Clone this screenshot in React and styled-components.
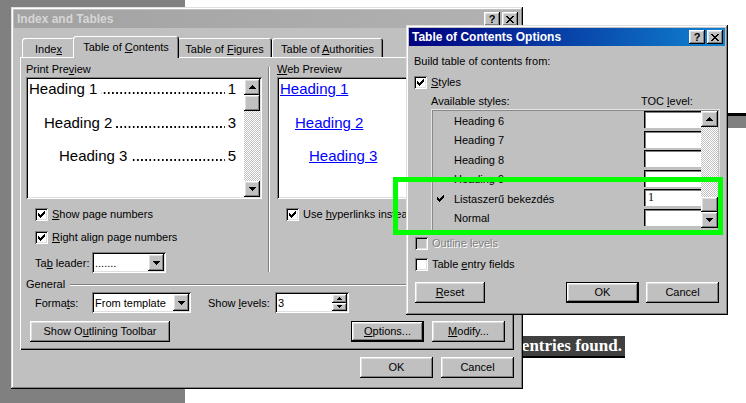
import React from 'react';
import styled, { createGlobalStyle, css } from 'styled-components';

const face = '#c0c0c0';

const GlobalStyle = createGlobalStyle`
  html, body {
    margin: 0;
    padding: 0;
    background: #fff;
  }
  body {
    font-family: "Liberation Sans", Arial, sans-serif;
    font-size: 11px;
    color: #000;
  }
  u {
    text-decoration: underline;
    text-underline-offset: 1px;
  }
`;

const raised = css`
  box-shadow: inset -1px -1px #000, inset 1px 1px #fff, inset -2px -2px #808080, inset 2px 2px #dfdfdf;
`;

const sunken = css`
  box-shadow: inset 1px 1px #808080, inset -1px -1px #fff, inset 2px 2px #000, inset -2px -2px #dfdfdf;
`;

const Desktop = styled.div`
  position: relative;
  width: 746px;
  height: 403px;
  overflow: hidden;
  background: linear-gradient(90deg, #808080 0 185px, #fff 185px);
`;

/* document content behind the dialogs */
const DocBar = styled.div`
  position: absolute;
  left: 728px;
  top: 113px;
  width: 18px;
  height: 15px;
  box-sizing: border-box;
  background: #808080;
  border-top: 3px solid #000;
`;

const Highlight = styled.div`
  position: absolute;
  right: 121px;
  top: 336px;
  height: 22px;
  box-sizing: border-box;
  padding: 0 3px 0 2px;
  background: #404040;
  border-bottom: 2px solid #000;
  color: #fff;
  font: bold 17px "Liberation Serif", "Times New Roman", serif;
  line-height: 20px;
  white-space: nowrap;
`;

const Window = styled.div`
  position: absolute;
  left: ${p => p.x}px;
  top: ${p => p.y}px;
  width: ${p => p.w}px;
  height: ${p => p.h}px;
  box-sizing: border-box;
  padding: 3px;
  background: ${face};
  box-shadow: inset -1px -1px #000, inset 1px 1px #dfdfdf, inset -2px -2px #808080, inset 2px 2px #fff;
  display: flex;
  flex-direction: column;
`;

const TitleBar = styled.div`
  height: 18px;
  flex-shrink: 0;
  display: flex;
  align-items: center;
  padding: 0 2px 0 3px;
  background: ${p => (p.active ? 'linear-gradient(90deg, #000080, #1084d0)' : 'linear-gradient(90deg, #a2a2a2, #b2b2b2)')};
  color: ${p => (p.active ? '#fff' : '#d6d6d6')};
  font-weight: bold;
  font-size: 12px;
`;

const TitleText = styled.span`
  flex: 1;
  white-space: nowrap;
`;

const TitleButton = styled.div`
  width: 16px;
  height: 14px;
  margin-left: ${p => p.gap || 0}px;
  box-sizing: border-box;
  background: ${face};
  ${raised};
  display: flex;
  align-items: center;
  justify-content: center;
  color: #000;
  font-size: 11px;
  font-weight: bold;
  line-height: 14px;
`;

const CloseGlyph = () => (
  <svg width="8" height="7" viewBox="0 0 8 7" shapeRendering="crispEdges">
    <path
      d="M0 0h2v1h-2z M6 0h2v1h-2z M1 1h2v1h-2z M5 1h2v1h-2z M2 2h4v1h-4z M3 3h2v1h-2z M2 4h4v1h-4z M1 5h2v1h-2z M5 5h2v1h-2z M0 6h2v1h-2z M6 6h2v1h-2z"
      fill="#000"
    />
  </svg>
);

const TitleButtons = () => (
  <>
    <TitleButton>?</TitleButton>
    <TitleButton gap={2}>
      <CloseGlyph />
    </TitleButton>
  </>
);

const CheckGlyph = () => (
  <svg width="7" height="7" viewBox="0 0 7 7" shapeRendering="crispEdges">
    <path
      d="M0 2h1v3h-1z M1 3h1v3h-1z M2 4h1v3h-1z M3 3h1v3h-1z M4 2h1v3h-1z M5 1h1v3h-1z M6 0h1v3h-1z"
      fill="#000"
    />
  </svg>
);

const Arrow = ({ up, small }) =>
  small ? (
    <svg width="5" height="3" viewBox="0 0 5 3" shapeRendering="crispEdges">
      <path d={up ? 'M2 0h1v1h-1z M1 1h3v1h-3z M0 2h5v1h-5z' : 'M0 0h5v1h-5z M1 1h3v1h-3z M2 2h1v1h-1z'} fill="#000" />
    </svg>
  ) : (
    <svg width="7" height="4" viewBox="0 0 7 4" shapeRendering="crispEdges">
      <path
        d={up ? 'M3 0h1v1h-1z M2 1h3v1h-3z M1 2h5v1h-5z M0 3h7v1h-7z' : 'M0 0h7v1h-7z M1 1h5v1h-5z M2 2h3v1h-3z M3 3h1v1h-1z'}
        fill="#000"
      />
    </svg>
  );

/* ---------- Index and Tables ---------- */

const MainBody = styled.div`
  flex: 1;
  display: flex;
  flex-direction: column;
  padding: 8px 6px 0 6px;
`;

const TabRow = styled.div`
  height: 21px;
  display: flex;
  align-items: flex-end;
  padding-left: 2px;
  position: relative;
  z-index: 1;
`;

const Tab = styled.div`
  position: relative;
  z-index: ${p => (p.selected ? 2 : 1)};
  width: ${p => p.w + (p.selected ? 4 : 0)}px;
  height: ${p => (p.selected ? 22 : 19)}px;
  margin: ${p => (p.selected ? '0 -2px -1px' : '0')};
  box-sizing: border-box;
  padding-top: 5px;
  background: ${face};
  border-radius: 3px 3px 0 0;
  box-shadow: inset 1px 1px #fff, inset -1px 0 #000, inset -2px 0 #808080;
  text-align: center;
  line-height: 13px;
  white-space: nowrap;
`;

const Panel = styled.div`
  height: 293px;
  box-sizing: border-box;
  padding: 6px 9px 8px 6px;
  background: ${face};
  box-shadow: inset 1px 1px #fff, inset -1px -1px #000, inset -2px -2px #808080;
  display: flex;
  flex-direction: column;
`;

const TopSection = styled.div`
  height: 210px;
  display: flex;
`;

const Column = styled.div`
  width: ${p => (p.w ? `${p.w}px` : 'auto')};
  flex: ${p => (p.w ? 'none' : 1)};
  display: flex;
  flex-direction: column;
  min-width: 0;
`;

const VSeparator = styled.div`
  width: 0;
  margin: 4px 7px 1px 6px;
  border-left: 1px solid #808080;
  border-right: 1px solid #fff;
`;

const Caption = styled.div`
  line-height: 13px;
  margin-bottom: 1px;
  white-space: nowrap;
`;

const PreviewBox = styled.div`
  height: 122px;
  box-sizing: border-box;
  padding: 2px;
  background: #fff;
  ${sunken};
  display: flex;
`;

const PreviewContent = styled.div`
  flex: 1;
  min-width: 0;
  padding: 1px ${p => p.pr || 0}px 0 1px;
  font-size: 15px;
`;

const LeaderRow = styled.div`
  display: flex;
  height: 17px;
  line-height: 17px;
  padding-left: ${p => p.indent}px;
  white-space: nowrap;
  & + & {
    margin-top: 16.5px;
  }
`;

/* dotted tab leader, drawn as a repeated dot */
const Dots = styled.span`
  flex: 1;
  margin: 0 3px 0 4px;
  background: linear-gradient(90deg, #000 1.4px, transparent 1.4px) right 12px / 4.17px 1.5px repeat-x;
`;

const LinkRow = styled.div`
  height: 17px;
  line-height: 17px;
  padding-left: ${p => p.indent}px;
  white-space: nowrap;
  & + & {
    margin-top: 16.5px;
  }
`;

const WebLink = styled.span`
  color: #0000ff;
  text-decoration: underline;
`;

const ScrollCol = styled.div`
  width: ${p => p.w}px;
  flex-shrink: 0;
  display: flex;
  flex-direction: column;
`;

const ScrollBtn = styled.div`
  height: 16px;
  flex-shrink: 0;
  background: ${face};
  ${raised};
  display: flex;
  align-items: center;
  justify-content: center;
`;

const Thumb = styled.div`
  height: ${p => p.h}px;
  flex-shrink: 0;
  background: ${face};
  ${raised};
`;

const Track = styled.div`
  flex: 1;
  background: repeating-conic-gradient(#fff 0% 25%, ${face} 0% 50%) 0 0 / 2px 2px;
`;

const ScrollBar = ({ w, thumb, thumbAtEnd }) => (
  <ScrollCol w={w}>
    <ScrollBtn>
      <Arrow up />
    </ScrollBtn>
    {!thumbAtEnd && <Thumb h={thumb} />}
    <Track />
    {thumbAtEnd && <Thumb h={thumb} />}
    <ScrollBtn>
      <Arrow />
    </ScrollBtn>
  </ScrollCol>
);

const CheckRow = styled.div`
  display: flex;
  align-items: center;
  gap: 4px;
  height: 13px;
  line-height: 13px;
  margin-top: ${p => p.mt || 0}px;
  padding-left: ${p => p.pl || 0}px;
  white-space: nowrap;
  color: ${p => (p.disabled ? '#808080' : '#000')};
  text-shadow: ${p => (p.disabled ? '1px 1px #fff' : 'none')};
`;

const Box = styled.span`
  width: 13px;
  height: 13px;
  flex-shrink: 0;
  box-sizing: border-box;
  background: ${p => (p.disabled ? face : '#fff')};
  ${sunken};
  display: inline-flex;
  align-items: center;
  justify-content: center;
`;

const Checkbox = ({ checked, disabled, children, mt, pl }) => (
  <CheckRow mt={mt} pl={pl} disabled={disabled}>
    <Box disabled={disabled}>{checked && <CheckGlyph />}</Box>
    <span>{children}</span>
  </CheckRow>
);

const FieldRow = styled.div`
  display: flex;
  align-items: center;
  height: 21px;
  margin-top: ${p => p.mt || 0}px;
  padding-left: ${p => p.pl || 0}px;
`;

const FieldLabel = styled.span`
  width: ${p => p.w}px;
  margin-left: ${p => p.ml || 0}px;
  flex-shrink: 0;
  white-space: nowrap;
`;

const Field = styled.div`
  width: ${p => p.w}px;
  height: 21px;
  box-sizing: border-box;
  padding: 2px;
  background: #fff;
  ${sunken};
  display: flex;
  align-items: center;
  flex-shrink: 0;
`;

const FieldText = styled.span`
  flex: 1;
  padding-left: 1px;
  white-space: nowrap;
  overflow: hidden;
`;

const DropButton = styled.div`
  width: 16px;
  height: 17px;
  background: ${face};
  ${raised};
  display: flex;
  align-items: center;
  justify-content: center;
`;

const SpinButtons = styled.div`
  width: 15px;
  height: 17px;
  display: flex;
  flex-direction: column;
`;

const SpinHalf = styled.div`
  flex: 1;
  background: ${face};
  ${raised};
  display: flex;
  align-items: center;
  justify-content: center;
`;

const GroupHeader = styled.div`
  display: flex;
  align-items: center;
  gap: 5px;
  margin-top: 5px;
  line-height: 13px;
  &::after {
    content: '';
    flex: 1;
    border-top: 1px solid #808080;
    border-bottom: 1px solid #fff;
  }
`;

const ButtonRow = styled.div`
  display: flex;
  align-items: center;
  gap: ${p => p.gap || 8}px;
  margin-top: ${p => p.mt || 0}px;
  padding-left: ${p => p.pl || 0}px;
  justify-content: ${p => (p.end ? 'flex-end' : 'flex-start')};
`;

const Button = styled.div`
  width: ${p => p.w}px;
  height: 21px;
  flex-shrink: 0;
  box-sizing: border-box;
  margin-left: ${p => (p.push ? 'auto' : '0')};
  background: ${face};
  border: ${p => (p.isDefault ? '1px solid #000' : 'none')};
  ${raised};
  display: flex;
  align-items: center;
  justify-content: center;
  line-height: 13px;
  white-space: nowrap;
`;

/* ---------- Table of Contents Options ---------- */

const OptionsBody = styled.div`
  flex: 1;
  display: flex;
  flex-direction: column;
  padding: 9px 6px 0 5px;
`;

const TextLine = styled.div`
  line-height: 13px;
  white-space: nowrap;
`;

const StylesHeader = styled.div`
  display: grid;
  grid-template-columns: 210px 1fr;
  margin: 6px 0 0 17px;
  line-height: 13px;
  white-space: nowrap;
`;

const StyleList = styled.div`
  width: 289px;
  height: 122px;
  box-sizing: border-box;
  margin: 1px 0 0 17px;
  padding: 2px 2px 3px 2px;
  background: ${face};
  box-shadow: inset 0 0 0 1px #e4e4e4, inset 1px 1px 0 1px #8a8a8a;
  display: flex;
`;

const StyleRows = styled.div`
  flex: 1;
  display: flex;
  flex-direction: column;
`;

const StyleRow = styled.div`
  height: 19.5px;
  display: grid;
  grid-template-columns: 21px 1fr 57px;
  align-items: center;
`;

const Mark = styled.span`
  display: flex;
  padding-left: 4px;
`;

const LevelInput = styled.div`
  align-self: start;
  height: 17px;
  box-sizing: border-box;
  padding-left: 3px;
  background: #fff;
  border-top: 1px solid #000;
  border-left: 1px solid #000;
  box-shadow: inset 1px 1px #808080;
  line-height: 15px;
  font-family: "Liberation Serif", serif;
  font-size: 12px;
`;

const GreenFrame = styled.div`
  position: absolute;
  left: 393px;
  top: 177px;
  width: 330px;
  height: 58px;
  box-sizing: border-box;
  border: 5px solid #00ff00;
  pointer-events: none;
`;

const tocStyles = [
  { name: 'Heading 6' },
  { name: 'Heading 7' },
  { name: 'Heading 8' },
  { name: 'Heading 9' },
  { name: 'Listaszerű bekezdés', checked: true, level: '1' },
  { name: 'Normal' },
];

const printRows = [
  { text: 'Heading 1', page: '1', indent: 0 },
  { text: 'Heading 2', page: '3', indent: 15 },
  { text: 'Heading 3', page: '5', indent: 30 },
];

const webRows = [
  { text: 'Heading 1', indent: 0 },
  { text: 'Heading 2', indent: 15 },
  { text: 'Heading 3', indent: 29 },
];

export default function App() {
  return (
    <>
      <GlobalStyle />
      <Desktop>
        <DocBar />
        <Highlight>No table of contents entries found.</Highlight>

        <Window x={11} y={7} w={512} h={382}>
          <TitleBar>
            <TitleText>Index and Tables</TitleText>
            <TitleButtons />
          </TitleBar>
          <MainBody>
            <TabRow>
              <Tab w={53}>
                Inde<u>x</u>
              </Tab>
              <Tab w={102} selected>
                Table of <u>C</u>ontents
              </Tab>
              <Tab w={95}>
                Table of <u>F</u>igures
              </Tab>
              <Tab w={111}>
                Table of <u>A</u>uthorities
              </Tab>
            </TabRow>
            <Panel>
              <TopSection>
                <Column w={236}>
                  <Caption>
                    Print Pre<u>v</u>iew
                  </Caption>
                  <PreviewBox>
                    <PreviewContent pr={8}>
                      {printRows.map(r => (
                        <LeaderRow key={r.text} indent={r.indent}>
                          <span>{r.text}</span>
                          <Dots />
                          <span>{r.page}</span>
                        </LeaderRow>
                      ))}
                    </PreviewContent>
                    <ScrollBar w={16} thumb={16} />
                  </PreviewBox>
                  <Checkbox checked mt={9} pl={9}>
                    <u>S</u>how page numbers
                  </Checkbox>
                  <Checkbox checked mt={10} pl={9}>
                    <u>R</u>ight align page numbers
                  </Checkbox>
                  <FieldRow mt={8} pl={9}>
                    <FieldLabel w={57}>
                      Ta<u>b</u> leader:
                    </FieldLabel>
                    <Field w={74}>
                      <FieldText>.......</FieldText>
                      <DropButton>
                        <Arrow />
                      </DropButton>
                    </Field>
                  </FieldRow>
                </Column>
                <VSeparator />
                <Column>
                  <Caption>
                    <u>W</u>eb Preview
                  </Caption>
                  <PreviewBox>
                    <PreviewContent>
                      {webRows.map(r => (
                        <LinkRow key={r.text} indent={r.indent}>
                          <WebLink>{r.text}</WebLink>
                        </LinkRow>
                      ))}
                    </PreviewContent>
                  </PreviewBox>
                  <Checkbox checked mt={9} pl={9}>
                    Use <u>h</u>yperlinks instead of page numbers
                  </Checkbox>
                </Column>
              </TopSection>

              <GroupHeader>General</GroupHeader>
              <FieldRow mt={1} pl={9}>
                <FieldLabel w={57}>
                  Forma<u>t</u>s:
                </FieldLabel>
                <Field w={99}>
                  <FieldText>From template</FieldText>
                  <DropButton>
                    <Arrow />
                  </DropButton>
                </Field>
                <FieldLabel w={67} ml={17}>
                  Show <u>l</u>evels:
                </FieldLabel>
                <Field w={74}>
                  <FieldText>3</FieldText>
                  <SpinButtons>
                    <SpinHalf>
                      <Arrow up small />
                    </SpinHalf>
                    <SpinHalf>
                      <Arrow small />
                    </SpinHalf>
                  </SpinButtons>
                </Field>
              </FieldRow>
              <ButtonRow mt={8} pl={4}>
                <Button w={140}>
                  Show O<u>u</u>tlining Toolbar
                </Button>
                <Button w={73} push isDefault>
                  <u>O</u>ptions...
                </Button>
                <Button w={73}>
                  <u>M</u>odify...
                </Button>
              </ButtonRow>
            </Panel>
            <ButtonRow mt={7} end>
              <Button w={73}>OK</Button>
              <Button w={73}>Cancel</Button>
            </ButtonRow>
          </MainBody>
        </Window>

        <Window x={406} y={25} w={322} h={290}>
          <TitleBar active>
            <TitleText>Table of Contents Options</TitleText>
            <TitleButtons />
          </TitleBar>
          <OptionsBody>
            <TextLine>Build table of contents from:</TextLine>
            <Checkbox checked mt={8}>
              <u>S</u>tyles
            </Checkbox>
            <StylesHeader>
              <span>Available styles:</span>
              <span>
                TOC <u>l</u>evel:
              </span>
            </StylesHeader>
            <StyleList>
              <StyleRows>
                {tocStyles.map(s => (
                  <StyleRow key={s.name}>
                    <Mark>{s.checked && <CheckGlyph />}</Mark>
                    <span>{s.name}</span>
                    <LevelInput>{s.level}</LevelInput>
                  </StyleRow>
                ))}
              </StyleRows>
              <ScrollBar w={17} thumb={15} thumbAtEnd />
            </StyleList>
            <Checkbox disabled mt={6} pl={1}>
              Outline levels
            </Checkbox>
            <Checkbox mt={8} pl={1}>
              Table <u>e</u>ntry fields
            </Checkbox>
            <ButtonRow mt={11} gap={7} pl={1}>
              <Button w={70}>
                <u>R</u>eset
              </Button>
              <Button w={73} push isDefault>
                OK
              </Button>
              <Button w={73}>Cancel</Button>
            </ButtonRow>
          </OptionsBody>
        </Window>

        <GreenFrame />
      </Desktop>
    </>
  );
}
